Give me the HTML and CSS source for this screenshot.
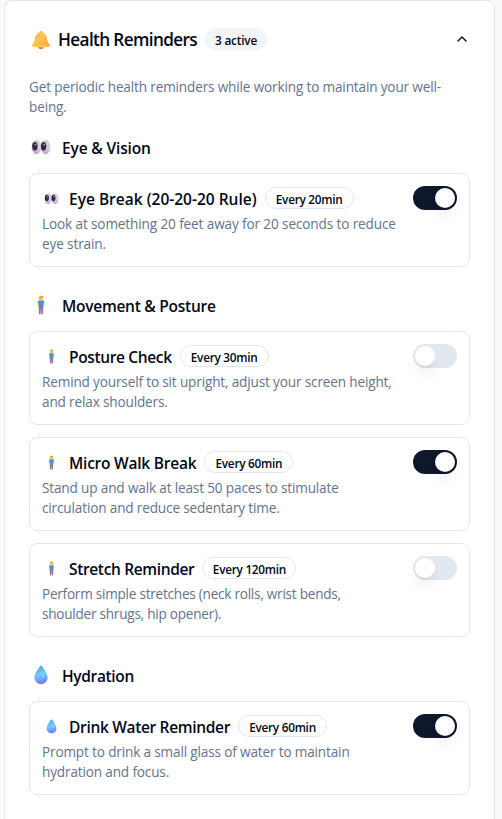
FILE: index.html
```html
<!DOCTYPE html>
<html lang="en">
<head>
<meta charset="utf-8">
<title>Health Reminders</title>
<link rel="stylesheet" href="styles.css">
</head>
<body>
<svg class="defs" width="0" height="0" aria-hidden="true">
  <defs>
    <linearGradient id="gold" x1="0" y1="0" x2="1" y2="1"><stop offset="0" stop-color="#eeb060"/><stop offset=".45" stop-color="#fcc750"/><stop offset="1" stop-color="#f79b45"/></linearGradient>
    <linearGradient id="water" x1="0.3" y1="0" x2="0.5" y2="1"><stop offset="0" stop-color="#4da9dc"/><stop offset=".5" stop-color="#6ccbff"/><stop offset="1" stop-color="#7b75f5"/></linearGradient>
    <linearGradient id="white-eye" x1="0.6" y1="0" x2="0.4" y2="1"><stop offset="0" stop-color="#d4d0d6"/><stop offset=".5" stop-color="#ddd2e6"/><stop offset="1" stop-color="#b99bce"/></linearGradient>
    <symbol id="bell" viewBox="0 0 20 20">
      <ellipse cx="10" cy="17.4" rx="2.5" ry="1.8" fill="#ed7354"/>
      <path d="M10 1c1.1 0 1.6.7 1.6 1.6 2.8.8 4.1 3 4.4 5.7.4 3.2 1 4.8 2.6 6.2.8.8.6 2.3-.8 2.4-5 .5-10.600.5-15.600 0-1.400-.1-1.600-1.600-.8-2.400C3 13.100 3.600 11.500 4 8.300c.3-2.700 1.600-4.900 4.400-5.700C8.400 1.700 8.900 1 10 1z" fill="url(#gold)"/>
      <path d="M1.300 15.600c5.700 1 11.700 1 17.400 0" fill="none" stroke="#ffd75c" stroke-width="1"/>
    </symbol>
    <symbol id="eyes" viewBox="0 0 20 20">
      <ellipse cx="5.400" cy="10" rx="4.900" ry="7.200" fill="url(#white-eye)"/>
      <ellipse cx="14.600" cy="10" rx="4.900" ry="7.200" fill="url(#white-eye)"/>
      <ellipse cx="3.900" cy="9.200" rx="2.700" ry="4.200" fill="#35273f"/>
      <ellipse cx="12.600" cy="9.200" rx="2.700" ry="4.200" fill="#35273f"/>
      <circle cx="4.500" cy="7.500" r="1" fill="#a99bb1"/>
      <circle cx="13.200" cy="7.500" r="1" fill="#a99bb1"/>
    </symbol>
    <symbol id="person" viewBox="0 0 20 20">
      <path d="M7.600 11h4.800l-.4 8.300h-1.600L10 13l-.4 6.300H8z" fill="#967697"/>
      <path d="M7.600 5.500h4.800c.6 0 .9.500.8 1.200l-.8 5.100H7.600l-.8-5.100c-.1-.7.200-1.200.8-1.200z" fill="#3f91d8"/>
      <path d="M7 7.500l.5 4.200M13 7.500l-.5 4.200" stroke="#f4b84a" stroke-width="1.200"/>
      <ellipse cx="10" cy="3.200" rx="2.100" ry="2.700" fill="#f7bd48"/>
      <path d="M8 2.500Q9 .2 12 1.200v1.200z" fill="#d9983c"/>
    </symbol>
    <symbol id="drop" viewBox="0 0 20 20">
      <path d="M10 .5c.6 0 1 .5 1.400 1.200C13.500 5 16.600 8.700 16.600 12.700a6.600 6.600 0 0 1-13.200 0C3.400 8.700 6.500 5 8.600 1.700 9 1 9.400.5 10 .5z" fill="url(#water)"/>
      <path d="M11.500 6.500c1.500 2 2.200 4 1.600 5.500-.8 1.200-2 0-2-1.500z" fill="#8fe1ff" opacity=".65"/>
    </symbol>
  </defs>
</svg>
<main class="card">
  <header class="header">
    <svg class="header-icon"><use href="#bell"/></svg>
    <h1>Health Reminders</h1>
    <span class="badge badge-soft">3 active</span>
    <svg class="chevron" viewBox="0 0 16 16"><path d="M4 10l4-4 4 4"/></svg>
  </header>
  <p class="intro">Get periodic health reminders while working to maintain your well-being.</p>

  <section>
    <h2><svg class="section-icon"><use href="#eyes"/></svg><span class="s-eye">Eye &amp; Vision</span></h2>
    <article class="item">
      <div class="text">
        <div class="title"><svg class="item-icon"><use href="#eyes"/></svg><h3 class="t-eye">Eye Break (20-20-20 Rule)</h3><span class="badge">Every 20min</span></div>
        <p class="d-eye">Look at something 20 feet away for 20 seconds to reduce<br>eye strain.</p>
      </div>
      <button class="switch on" role="switch" aria-checked="true"><span class="thumb"></span></button>
    </article>
  </section>

  <section>
    <h2><svg class="section-icon"><use href="#person"/></svg><span class="s-move">Movement &amp; Posture</span></h2>
    <article class="item">
      <div class="text">
        <div class="title"><svg class="item-icon"><use href="#person"/></svg><h3 class="t-posture">Posture Check</h3><span class="badge">Every 30min</span></div>
        <p class="d-posture">Remind yourself to sit upright, adjust your screen height,<br>and relax shoulders.</p>
      </div>
      <button class="switch" role="switch" aria-checked="false"><span class="thumb"></span></button>
    </article>
    <article class="item">
      <div class="text">
        <div class="title"><svg class="item-icon"><use href="#person"/></svg><h3 class="t-walk">Micro Walk Break</h3><span class="badge">Every 60min</span></div>
        <p class="d-walk">Stand up and walk at least 50 paces to stimulate<br>circulation and reduce sedentary time.</p>
      </div>
      <button class="switch on" role="switch" aria-checked="true"><span class="thumb"></span></button>
    </article>
    <article class="item">
      <div class="text">
        <div class="title"><svg class="item-icon"><use href="#person"/></svg><h3 class="t-stretch">Stretch Reminder</h3><span class="badge">Every 120min</span></div>
        <p class="d-stretch">Perform simple stretches (neck rolls, wrist bends,<br>shoulder shrugs, hip opener).</p>
      </div>
      <button class="switch" role="switch" aria-checked="false"><span class="thumb"></span></button>
    </article>
  </section>

  <section>
    <h2><svg class="section-icon"><use href="#drop"/></svg><span class="s-water">Hydration</span></h2>
    <article class="item">
      <div class="text">
        <div class="title"><svg class="item-icon"><use href="#drop"/></svg><h3 class="t-water">Drink Water Reminder</h3><span class="badge">Every 60min</span></div>
        <p class="d-water">Prompt to drink a small glass of water to maintain<br>hydration and focus.</p>
      </div>
      <button class="switch on" role="switch" aria-checked="true"><span class="thumb"></span></button>
    </article>
  </section>
</main>
</body>
</html>
```

FILE: styles.css
```css
* { box-sizing: border-box; margin: 0; padding: 0; }
body {
  background: #f8fafc;
  color: #020817;
  font-family: "Segoe UI", "Open Sans", "Noto Sans", sans-serif;
}
.defs { position: absolute; }
.card {
  width: 491px;
  height: 819px;
  margin-left: 4px;
  padding: 24px 24px 0;
  background: #fff;
  border: 1px solid #e2e8f0;
  border-bottom: 0;
  border-radius: 8px 8px 0 0;
}
svg { flex: none; }
.header { display: flex; align-items: center; height: 28px; }
.header-icon { width: 20px; height: 20px; margin: 2px 7px 0 2px; }
h1 { width: 146px; padding-top: 1px; font-size: 17.2px; line-height: 28px; font-weight: 600; letter-spacing: -.63px; white-space: nowrap; }
.chevron { width: 16px; height: 16px; margin-left: auto; fill: none; stroke: #020817; stroke-width: 1.4; stroke-linecap: round; stroke-linejoin: round; }
.intro, .text p { color: #64748b; font-size: 13.6px; line-height: 20px; letter-spacing: -.16px; }
.intro { margin: 24px 0 16px; }
section { display: flex; flex-direction: column; gap: 12px; margin-bottom: 24px; }
section:last-child { margin-bottom: 0; }
h2 { display: flex; align-items: center; height: 28px; font-size: 15.5px; line-height: 28px; font-weight: 600; }
h2 span { padding-top: 1px; }
.section-icon { width: 20px; height: 20px; margin: 0 11px 0 2px; }
.item { display: flex; justify-content: space-between; height: 94px; padding: 12px; border: 1px solid #e2e8f0; border-radius: 8px; }
.text { white-space: nowrap; }
.title { display: flex; align-items: center; height: 24px; margin-bottom: 4px; }
.item-icon { width: 15px; height: 15px; margin: 0 10px 0 2px; }
h3 { margin-right: 8px; padding-top: 1px; font-size: 15.5px; line-height: 24px; font-weight: 600; }
.badge { display: inline-flex; align-items: center; justify-content: center; height: 22px; width: 89px; padding-top: 1px; border: 1px solid #e2e8f0; border-radius: 11px; font-size: 11.8px; line-height: 16px; font-weight: 600; letter-spacing: -.27px; white-space: nowrap; }
.badge-soft { width: 64px; background: #f1f5f9; border-color: #f1f5f9; letter-spacing: -.2px; }
.t-stretch + .badge { width: 94px; }
.s-eye { letter-spacing: -.15px; }
.s-move { letter-spacing: -.26px; }
.s-water { letter-spacing: -.35px; }
.t-posture { letter-spacing: -.36px; }
.t-walk { letter-spacing: -.23px; }
.t-stretch { letter-spacing: -.35px; }
.t-water { letter-spacing: -.33px; }
.text .d-eye { letter-spacing: -.13px; }
.text .d-stretch { letter-spacing: -.25px; }
.switch { flex: none; width: 44px; height: 24px; padding: 2px; border: 0; border-radius: 12px; background: #e2e8f0; }
.switch.on { background: #0f172a; }
.thumb { display: block; width: 20px; height: 20px; border-radius: 50%; background: #fff; box-shadow: 0 10px 15px -3px rgb(0 0 0 / .1), 0 4px 6px -4px rgb(0 0 0 / .1); }
.on .thumb { margin-left: 20px; }
```
